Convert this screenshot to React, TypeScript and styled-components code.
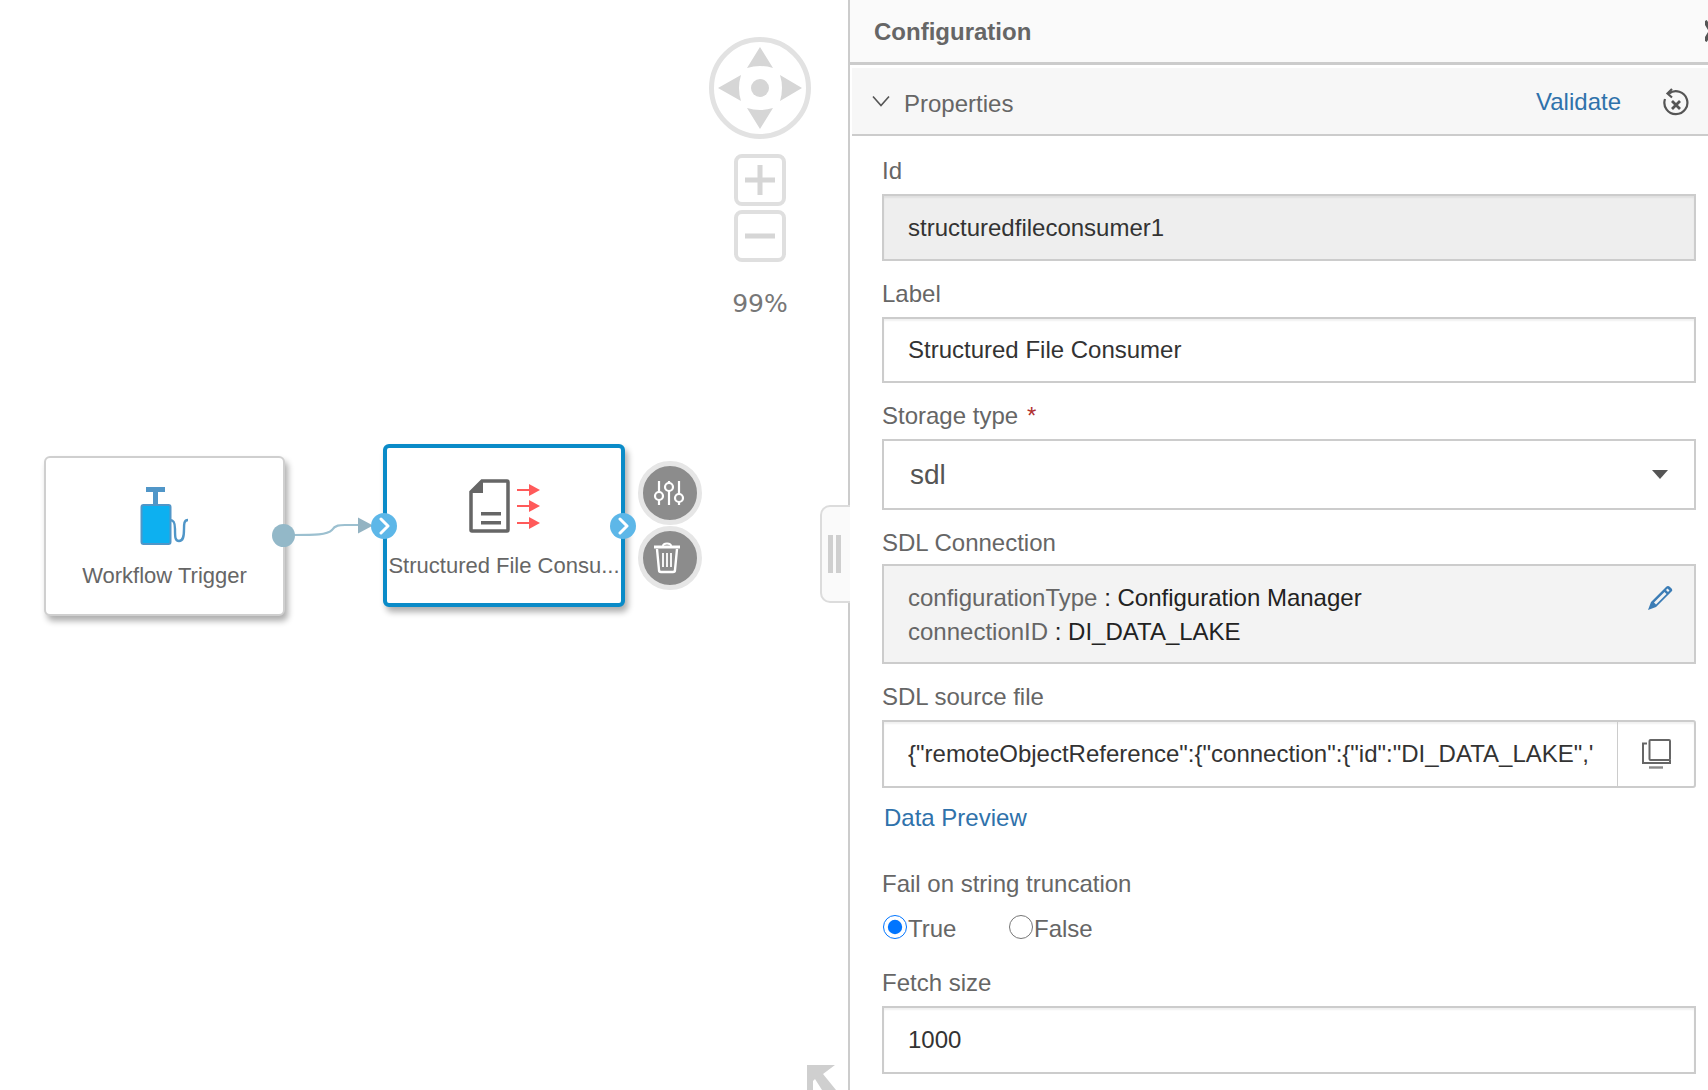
import React from "react";
import styled, { createGlobalStyle } from "styled-components";

const Global = createGlobalStyle`
  html, body { margin: 0; padding: 0; background: #fff; }
  body { font-family: "Liberation Sans", Arial, Helvetica, sans-serif; overflow: hidden; }
  * { box-sizing: border-box; }
`;

const Page = styled.div`
  display: flex;
  width: 1708px;
  height: 1090px;
  overflow: hidden;
`;

const Canvas = styled.div`
  position: relative;
  flex: none;
  width: 848px;
  height: 100%;
`;

const Node = styled.div<{ $selected?: boolean }>`
  position: absolute;
  display: flex;
  flex-direction: column;
  align-items: center;
  background: #fff;
  border-radius: 6px;
  border: ${(p) => (p.$selected ? "4px solid #0a8bc8" : "2px solid #cfcfcf")};
  box-shadow: 3px 5px 6px rgba(0, 0, 0, 0.32);
  left: ${(p) => (p.$selected ? 383 : 44)}px;
  top: ${(p) => (p.$selected ? 444 : 456)}px;
  width: ${(p) => (p.$selected ? 242 : 241)}px;
  height: ${(p) => (p.$selected ? 163 : 160)}px;
  padding-top: ${(p) => (p.$selected ? 31 : 29)}px;
`;

const NodeLabel = styled.div<{ $selected?: boolean }>`
  font-size: 22px;
  line-height: 34px;
  color: #666;
  white-space: nowrap;
  margin-top: ${(p) => (p.$selected ? 16 : 14)}px;
`;

const Port = styled.div<{ $x: number; $y: number }>`
  position: absolute;
  left: ${(p) => p.$x - 13}px;
  top: ${(p) => p.$y - 13}px;
  width: 26px;
  height: 26px;
  border-radius: 50%;
  background: #5db7e8;
  display: flex;
  align-items: center;
  justify-content: center;
`;

const SourceDot = styled.div`
  position: absolute;
  left: 272px;
  top: 524px;
  width: 23px;
  height: 23px;
  border-radius: 50%;
  background: #93b8c8;
`;

const Connector = styled.svg`
  position: absolute;
  left: 290px;
  top: 510px;
`;

const ActionButton = styled.div<{ $y: number; $nudge: number }>`
  position: absolute;
  left: 638px;
  top: ${(p) => p.$y}px;
  width: 64px;
  height: 64px;
  border-radius: 50%;
  background: #8c8c8c;
  border: 5px solid #e6e6e6;
  display: flex;
  align-items: center;
  justify-content: center;
  padding-right: ${(p) => p.$nudge}px;
`;

const NavWidget = styled.div`
  position: absolute;
  left: 709px;
  top: 37px;
  width: 102px;
  display: flex;
  flex-direction: column;
  align-items: center;
`;

const ZoomButton = styled.div<{ $first?: boolean }>`
  width: 52px;
  height: 52px;
  margin-top: ${(p) => (p.$first ? 15 : 4)}px;
  border: 4px solid #dfdfdf;
  border-radius: 8px;
  display: flex;
  align-items: center;
  justify-content: center;
`;

const ZoomText = styled.div`
  margin-top: 27px;
  font-family: "DejaVu Sans", Verdana, sans-serif;
  font-size: 25px;
  line-height: 30px;
  color: #777;
`;

const Sash = styled.div`
  position: absolute;
  left: 820px;
  top: 505px;
  width: 30px;
  height: 98px;
  background: #fafafa;
  border: 2px solid #dcdcdc;
  border-right: none;
  border-radius: 10px 0 0 10px;
  display: flex;
  align-items: center;
  gap: 3px;
  padding-left: 6px;
`;

const SashBar = styled.div`
  width: 5px;
  height: 38px;
  background: #cfcfcf;
`;

const CornerArrow = styled.svg`
  position: absolute;
  left: 807px;
  top: 1065px;
`;

const Panel = styled.div`
  flex: 1;
  min-width: 0;
  height: 100%;
  border-left: 2px solid #ccc;
  display: flex;
  flex-direction: column;
  overflow: hidden;
`;

const PanelHeader = styled.div`
  flex: none;
  height: 65px;
  background: #fafafa;
  border-bottom: 3px solid #ccc;
  display: flex;
  align-items: center;
  justify-content: space-between;
  padding-left: 24px;
`;

const PanelTitle = styled.div`
  font-size: 24px;
  font-weight: 700;
  color: #666;
  padding-top: 2px;
`;

const SectionHeader = styled.div`
  flex: none;
  height: 68px;
  margin: 3px 0 0 2px;
  background: #f7f7f7;
  border-bottom: 2px solid #ccc;
  display: flex;
  align-items: center;
  padding: 0 18px 0 20px;
`;

const SectionTitle = styled.div`
  flex: 1;
  margin-left: 14px;
  font-size: 24px;
  color: #666;
  line-height: 34px;
  padding-top: 6px;
`;

const LinkText = styled.div`
  font-size: 24px;
  line-height: 34px;
  color: #2f72ab;
`;

const ValidateLink = styled(LinkText)`
  margin-right: 41px;
  margin-top: 1px;
`;

const PreviewLink = styled(LinkText)`
  margin: -3px 0 32px 2px;
`;

const ResetSlot = styled.div`
  display: flex;
  padding-top: 4px;
`;

const Body = styled.div`
  padding: 18px 12px 0 32px;
`;

const Field = styled.div`
  margin-bottom: 16px;
`;

const Label = styled.div`
  font-size: 24px;
  line-height: 34px;
  height: 34px;
  margin-bottom: 6px;
  color: #666;
`;

const Required = styled.span`
  color: #b03030;
  margin-left: 9px;
`;

const TextBox = styled.div<{ $disabled?: boolean; $height?: number }>`
  height: ${(p) => p.$height ?? 67}px;
  border: 2px solid #ccc;
  background: ${(p) => (p.$disabled ? "#eee" : "#fff")};
  box-shadow: inset 0 2px 2px rgba(0, 0, 0, 0.06);
  padding: 0 24px;
  display: flex;
  align-items: center;
  font-size: 24px;
  color: #333;
`;

const SelectBox = styled.div`
  height: 71px;
  border: 2px solid #ccc;
  background: #fff;
  display: flex;
  align-items: center;
  justify-content: space-between;
  padding: 0 26px 0 26px;
  font-size: 28px;
  color: #555;
`;

const Caret = styled.div`
  width: 0;
  height: 0;
  border-left: 8px solid transparent;
  border-right: 8px solid transparent;
  border-top: 9px solid #555;
`;

const ConnectionBox = styled.div`
  height: 100px;
  margin-top: -2px;
  border: 2px solid #ccc;
  background: #f3f3f3;
  padding: 15px 21px 0 24px;
  display: flex;
  justify-content: space-between;
  align-items: flex-start;
`;

const PencilSlot = styled.div`
  display: flex;
  margin-top: 4px;
`;

const ConnectionRow = styled.div`
  font-size: 24px;
  line-height: 34px;
  color: #222;
`;

const ConnectionKey = styled.span`
  color: #666;
`;

const FileBox = styled.div`
  height: 68px;
  border: 2px solid #ccc;
  border-radius: 0 3px 3px 0;
  box-shadow: inset 0 2px 2px rgba(0, 0, 0, 0.06);
  display: flex;
  align-items: stretch;
`;

const FileValue = styled.div`
  flex: 1;
  min-width: 0;
  padding: 0 23px 0 24px;
  display: flex;
  align-items: center;
`;

const FileText = styled.div`
  overflow: hidden;
  white-space: nowrap;
  font-size: 24px;
  color: #333;
`;

const CopyButton = styled.div`
  flex: none;
  width: 77px;
  border-left: 1px solid #ccc;
  display: flex;
  align-items: center;
  justify-content: center;
`;

const RadioRow = styled.div`
  display: flex;
  height: 44px;
  align-items: center;
  margin: -2px 0 17px 1px;
  padding-top: 4px;
`;

const RadioOption = styled.label`
  display: flex;
  align-items: center;
  width: 126px;
  font-size: 24px;
  color: #666;
`;

const RadioInput = styled.input`
  width: 24px;
  height: 24px;
  margin: -5px 1px 0 0;
  accent-color: #0075ff;
`;

const PumpIcon = () => (
  <svg width="52" height="58" viewBox="0 0 52 58" fill="none">
    <rect x="7" y="0" width="19" height="5" fill="#5096c8" />
    <rect x="14" y="5" width="5" height="12" fill="#5096c8" />
    <rect x="2.500" y="18" width="29" height="39" rx="2" fill="#0db0f0" stroke="#5096c8" strokeWidth="2" />
    <path d="M31 33c4 0 5 3 5 9 0 8 0 12 4 12s5-4 5-12c0-5 0-9 4-9" stroke="#5096c8" strokeWidth="2.400" />
  </svg>
);

const DocIcon = () => (
  <svg width="72" height="54" viewBox="0 0 72 54" fill="none" style={{ marginLeft: 1 }}>
    <path d="M13 2h25a1 1 0 0 1 1 1v48a1 1 0 0 1-1 1H3a1 1 0 0 1-1-1V13z" stroke="#666" strokeWidth="3.500" />
    <path d="M14 1 1 13v1h13z" fill="#666" />
    <rect x="12" y="33" width="20" height="3.500" fill="#666" />
    <rect x="12" y="42" width="20" height="3.500" fill="#666" />
    <g fill="#ff5a5a">
      <rect x="48" y="10" width="14" height="2" />
      <path d="M60 5l11 6-11 6z" />
      <rect x="48" y="26" width="14" height="2" />
      <path d="M60 21l11 6-11 6z" />
      <rect x="48" y="43" width="14" height="2" />
      <path d="M60 38l11 6-11 6z" />
    </g>
  </svg>
);

const PortChevron = () => (
  <svg width="14" height="18" viewBox="0 0 14 18" fill="none">
    <path d="M4 2l7 7-7 7" stroke="#fff" strokeWidth="3" strokeLinecap="round" strokeLinejoin="round" />
  </svg>
);

const SlidersIcon = () => (
  <svg width="32" height="30" viewBox="0 0 32 30" fill="none" stroke="#fff" strokeWidth="2.200">
    <path d="M6 3v11M6 22v5M16 3v2M16 13v14M26 3v13M26 24v3" />
    <circle cx="6" cy="18" r="4" />
    <circle cx="16" cy="9" r="4" />
    <circle cx="26" cy="20" r="4" />
  </svg>
);

const TrashIcon = () => (
  <svg width="30" height="32" viewBox="0 0 30 32" fill="none" stroke="#fff">
    <path d="M2 5h26" strokeWidth="3" />
    <path d="M11 4c0-2 1-2.500 4-2.500S19 2 19 4" strokeWidth="2" />
    <path d="M5 7l2 21c0 1 1 2 2 2h12c1 0 2-1 2-2l2-21" strokeWidth="2.400" />
    <path d="M11 11v14M15 11v14M19 11v14" strokeWidth="1.800" />
  </svg>
);

const PanIcon = () => (
  <svg width="102" height="102" viewBox="0 0 102 102" fill="none">
    <circle cx="51" cy="51" r="48.500" stroke="#e2e2e2" strokeWidth="5" />
    <g fill="#d6d6d6">
      <circle cx="51" cy="51" r="9" />
      <path d="M51 10 64 31Q51 27 38 31z" />
      <path d="M51 92 64 71Q51 75 38 71z" />
      <path d="M9 51 32 38Q28 51 32 64z" />
      <path d="M93 51 71 38Q75 51 71 64z" />
    </g>
  </svg>
);

const ZoomGlyph = ({ plus }: { plus?: boolean }) => (
  <svg width="30" height="30" viewBox="0 0 30 30" fill="#d6d6d6">
    <rect x="0" y="12.500" width="30" height="5" />
    {plus && <rect x="12.500" y="0" width="5" height="30" />}
  </svg>
);

const ChevronDown = () => (
  <svg width="18" height="12" viewBox="0 0 18 12" fill="none">
    <path d="M1 1.500l8 9 8-9" stroke="#555" strokeWidth="1.600" />
  </svg>
);

const ResetIcon = () => (
  <svg width="28" height="30" viewBox="0 0 28 30" fill="none" stroke="#555" strokeWidth="2.200">
    <path d="M7 5.500a11.500 11.500 0 1 1-4 5.500" />
    <path d="M10 1 5.500 5.500 10 9.500" />
    <path d="M10 13l8 8M18 13l-8 8" strokeWidth="2.800" />
  </svg>
);

const PencilIcon = () => (
  <svg width="26" height="26" viewBox="0 0 26 26">
    <path d="M1 25 4 17 19 2Q21 0 23 2L25 4Q26 6 24 7L9 22Z" fill="#3b7cb5" />
    <path d="M7 17.500 17.500 7 19.500 9 9 19.500Z" fill="#f3f3f3" />
    <path d="M20.500 3.500 22.500 5.500 21 7 19 5Z" fill="#f3f3f3" />
  </svg>
);

const CopyIcon = () => (
  <svg width="30" height="30" viewBox="0 0 30 30" fill="none" stroke="#666" strokeWidth="2">
    <rect x="8.500" y="1" width="20.500" height="20" rx="1" />
    <path d="M6 4.500H2V24H29V21" />
    <path d="M8 28.500H22" stroke="#888" strokeWidth="2.400" />
  </svg>
);

const CloseSliver = styled.svg`
  flex: none;
`;

export default function App() {
  return (
    <>
      <Global />
      <Page>
        <Canvas>
          <NavWidget>
            <PanIcon />
            <ZoomButton $first>
              <ZoomGlyph plus />
            </ZoomButton>
            <ZoomButton>
              <ZoomGlyph />
            </ZoomButton>
            <ZoomText>99%</ZoomText>
          </NavWidget>

          <Node>
            <PumpIcon />
            <NodeLabel>Workflow Trigger</NodeLabel>
          </Node>
          <Node $selected>
            <DocIcon />
            <NodeLabel $selected>Structured File Consu...</NodeLabel>
          </Node>

          <Connector width="90" height="40" viewBox="0 0 90 40" fill="none">
            <path d="M3 25C25 25 37 25 42 20C45 15 50 15 55 15H70" stroke="#9cc0d0" strokeWidth="2.200" />
            <path d="M83 15.500 68 7.500v16z" fill="#93b3c2" />
          </Connector>
          <SourceDot />
          <Port $x={384} $y={526}>
            <PortChevron />
          </Port>
          <Port $x={623} $y={526}>
            <PortChevron />
          </Port>

          <ActionButton $y={461} $nudge={2}>
            <SlidersIcon />
          </ActionButton>
          <ActionButton $y={526} $nudge={6}>
            <TrashIcon />
          </ActionButton>

          <Sash>
            <SashBar />
            <SashBar />
          </Sash>

          <CornerArrow width="30" height="25" viewBox="0 0 30 25" fill="#cfcfcf">
            <path d="M0 0H28L16 9L29 25H15L8 14L6 16V25H0Z" />
          </CornerArrow>
        </Canvas>

        <Panel>
          <PanelHeader>
            <PanelTitle>Configuration</PanelTitle>
            <CloseSliver width="3" height="22" viewBox="0 0 3 22" fill="none">
              <path d="M0 1l12 20M0 21 12 1" stroke="#555" strokeWidth="4" />
            </CloseSliver>
          </PanelHeader>

          <SectionHeader>
            <ChevronDown />
            <SectionTitle>Properties</SectionTitle>
            <ValidateLink>Validate</ValidateLink>
            <ResetSlot>
              <ResetIcon />
            </ResetSlot>
          </SectionHeader>

          <Body>
            <Field>
              <Label>Id</Label>
              <TextBox $disabled>structuredfileconsumer1</TextBox>
            </Field>
            <Field>
              <Label>Label</Label>
              <TextBox $height={66}>Structured File Consumer</TextBox>
            </Field>
            <Field>
              <Label>
                Storage type<Required>*</Required>
              </Label>
              <SelectBox>
                sdl
                <Caret />
              </SelectBox>
            </Field>
            <Field>
              <Label>SDL Connection</Label>
              <ConnectionBox>
                <div>
                  <ConnectionRow>
                    <ConnectionKey>configurationType</ConnectionKey> : Configuration Manager
                  </ConnectionRow>
                  <ConnectionRow>
                    <ConnectionKey>connectionID</ConnectionKey> : DI_DATA_LAKE
                  </ConnectionRow>
                </div>
                <PencilSlot>
                  <PencilIcon />
                </PencilSlot>
              </ConnectionBox>
            </Field>
            <Field>
              <Label>SDL source file</Label>
              <FileBox>
                <FileValue>
                  <FileText>
                    {'{"remoteObjectReference":{"connection":{"id":"DI_DATA_LAKE","type":"SDL"},"remoteObjectType":"FILE.PARQUET"}}'}
                  </FileText>
                </FileValue>
                <CopyButton>
                  <CopyIcon />
                </CopyButton>
              </FileBox>
            </Field>
            <PreviewLink>Data Preview</PreviewLink>
            <Label>Fail on string truncation</Label>
            <RadioRow>
              <RadioOption>
                <RadioInput type="radio" name="fail" defaultChecked />
                True
              </RadioOption>
              <RadioOption>
                <RadioInput type="radio" name="fail" />
                False
              </RadioOption>
            </RadioRow>
            <Field>
              <Label>Fetch size</Label>
              <TextBox $height={68}>1000</TextBox>
            </Field>
          </Body>
        </Panel>
      </Page>
    </>
  );
}
